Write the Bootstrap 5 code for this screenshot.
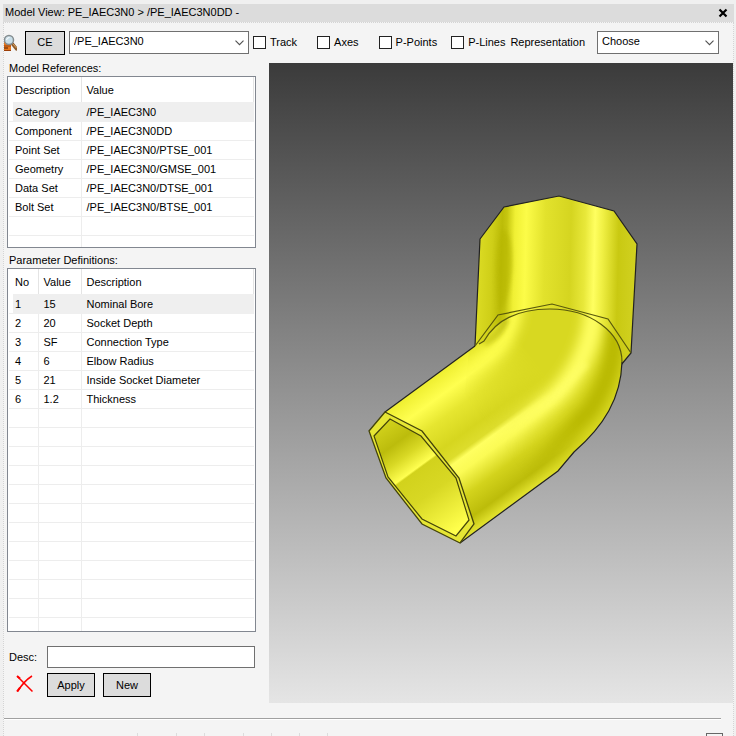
<!DOCTYPE html>
<html lang="en">
<head>
<meta charset="utf-8">
<meta name="viewport" content="width=device-width, initial-scale=1">
<title>Model View</title>
<link href="https://cdn.jsdelivr.net/npm/bootstrap@5.3.0/dist/css/bootstrap.min.css" rel="stylesheet">
<style>
  body { background: #f0f0f0; color: #000; font: 11px/13px "Liberation Sans", Arial, sans-serif; }
  .dock { margin: 4px 2px 0 3px; }
  .dock-title { height: 18px; background: #dcdcdc; padding: 0 6px 1px 2px; }
  .dock-body { background: #f4f4f4; border: 1px dotted #d4d4d4; border-bottom: 0; min-height: calc(100vh - 22px); }
  .close-btn { width: 10px; height: 10px; line-height: 0; }
  .toolbar { height: 40px; padding: 0 14px 1px 0; }
  .win-btn { height: 24px; border: 1px solid #000; border-radius: 0; background: #dcdcdc; color: #000; font-size: 11px; line-height: 13px; padding: 0; }
  .win-btn:hover { background: #e8e8e8; color: #000; border-color: #000; }
  .ce-btn { width: 40px; }
  .win-select { height: 23px; border: 1px solid #707070; border-radius: 0; color: #000; font-size: 11px; line-height: 13px; padding: 3px 20px 5px 4px;
    background: #fff url("data:image/svg+xml,%3Csvg xmlns='http://www.w3.org/2000/svg' viewBox='0 0 9 6'%3E%3Cpath d='M.5 .7 4.5 4.7 8.5 .7' fill='none' stroke='%23505050' stroke-width='1.1'/%3E%3C/svg%3E") no-repeat right 4px center / 9px 6px; }
  .elem-select { flex: 0 1 180px; width: 180px; }
  .rep-select { flex: 0 1 122px; width: 122px; margin-left: 12px; }
  .win-check { gap: 4px; margin-right: 20px; }
  .win-check.tight { margin-right: 14px; }
  .win-check:last-child { margin-right: 0; }
  .win-check .form-check-input { width: 13px; height: 13px; margin: 0; border: 1px solid #222; border-radius: 0; background-color: #fff; }
  .win-check label { padding-bottom: 1px; }
  .side { flex: 0 0 265px; padding: 0 13px 0 3px; }
  .side-label { margin: 0; padding-left: 2px; height: 13px; font-size: 11px; line-height: 11px; font-weight: 400; }
  .list-box + .side-label { margin-top: 7px; }
  .list-box { border: 1px solid #828790; background: #fff; padding: 0 1px; }
  .list-box table { margin: 0; color: #000; table-layout: fixed; }
  .list-box th, .list-box td { padding: 0 0 0 5px; font-weight: normal; vertical-align: middle; border: 0 solid #ededed; border-right-width: 1px; box-shadow: none; background: transparent; }
  .list-box th { height: 25px; padding-top: 2px; border-color: #e4e4e4; }
  .list-box td { height: 19px; border-bottom-width: 1px; padding-top: 2px; }
  .list-box td:last-child { border-right-width: 0; }
  .list-box th:first-child, .list-box td:first-child { padding-left: 6px; }
  .list-box tr.picked td { background: #efefef; border-color: #efefef; }
  .list-box tr.picked td:first-child { background: linear-gradient(90deg, #fff 4px, #efefef 4px); }
  .list-box tr.rest td { border-bottom-width: 0; padding: 0; }
  .refs tr.rest td { height: 12px; }
  .params tr.rest td { height: 14px; }
  .c-no { width: 29px; } .c-val { width: 43px; } .c-desc { width: 72px; }
  .desc-row { margin-top: 14px; padding-left: 2px; }
  .desc-row label { width: 38px; flex: none; }
  .win-input { height: 22px; border: 1px solid #707070; border-radius: 0; font-size: 11px; padding: 0 4px; margin-right: 1px; }
  .act-row { margin-top: 5px; gap: 8px; }
  .act-row .win-btn { width: 48px; }
  .del-btn { width: 32px; line-height: 0; padding: 0 0 3px 4px; }
  .stage { background: linear-gradient(#3b3b3b, #e5e5e5); }
  .rule { height: 2px; margin: 15px 12px 0 0; background: linear-gradient(#a0a0a0 50%, #fff 50%); }
  .strip { margin-top: 13px; height: 3px; padding: 0 10px 0 133px; overflow: hidden; }
  .tick { width: 1px; height: 3px; margin-right: 27px; background: #dcdcdc; }
  .tick.wide { margin-right: 38px; }
  .corner { width: 17px; height: 12px; border: 1px solid #666; }
</style>
<script src="https://cdn.jsdelivr.net/npm/bootstrap@5.3.0/dist/js/bootstrap.bundle.min.js"></script>
</head>
<body>
<main class="dock">
  <header class="dock-title d-flex align-items-center justify-content-between">
    <span>Model View: PE_IAEC3N0 &gt; /PE_IAEC3N0DD -</span>
    <button type="button" class="close-btn border-0 bg-transparent p-0" aria-label="Close">
      <svg width="10" height="10" viewBox="0 0 10 10"><path d="M1.5 1.5 8.5 8.5M8.5 1.5 1.5 8.5" stroke="#000" stroke-width="2.2" fill="none"/></svg>
    </button>
  </header>

  <div class="dock-body">
    <div class="toolbar d-flex align-items-center">
      <svg class="flex-shrink-0 me-2" width="13" height="18" viewBox="0 0 13 18" aria-hidden="true">
        <path d="M-3 7H7V17H-3Z" fill="#e8781c"/><path d="M-3 12H7M-3 16.500H7" stroke="#9c3f08"/><path d="M0 14H4" stroke="#552308"/>
        <path d="M8.500 10 12.500 15" stroke="#8a5a2c" stroke-width="3.200" stroke-linecap="round"/><path d="M8.500 9.500 12.500 14" stroke="#e0a660"/>
        <circle cx="5" cy="6" r="4.500" fill="#c9dfe9" stroke="#858d90" stroke-width="1.500"/><path d="M2.500 6Q3 3.500 5.500 3.500" stroke="#fff" fill="none"/>
      </svg>
      <button type="button" class="btn win-btn ce-btn flex-shrink-0 me-1">CE</button>
      <select class="form-select win-select elem-select" aria-label="Element"><option>/PE_IAEC3N0</option></select>
      <div class="d-flex align-items-center flex-grow-1 ms-1">
        <div class="win-check d-flex align-items-center"><input class="form-check-input" type="checkbox" id="track"><label for="track">Track</label></div>
        <div class="win-check d-flex align-items-center"><input class="form-check-input" type="checkbox" id="axes"><label for="axes">Axes</label></div>
        <div class="win-check tight d-flex align-items-center"><input class="form-check-input" type="checkbox" id="points"><label for="points">P-Points</label></div>
        <div class="win-check d-flex align-items-center"><input class="form-check-input" type="checkbox" id="lines"><label for="lines">P-Lines</label></div>
      </div>
      <label for="rep">Representation</label>
      <select class="form-select win-select rep-select" id="rep"><option>Choose</option></select>
    </div>

    <div class="d-flex">
      <section class="side">
        <h2 class="side-label" id="refs-label">Model References:</h2>
        <div class="list-box refs">
          <table class="table" aria-labelledby="refs-label">
            <colgroup><col class="c-desc"><col></colgroup>
            <thead><tr><th>Description</th><th>Value</th></tr></thead>
            <tbody>
              <tr class="picked"><td>Category</td><td>/PE_IAEC3N0</td></tr>
              <tr><td>Component</td><td>/PE_IAEC3N0DD</td></tr>
              <tr><td>Point Set</td><td>/PE_IAEC3N0/PTSE_001</td></tr>
              <tr><td>Geometry</td><td>/PE_IAEC3N0/GMSE_001</td></tr>
              <tr><td>Data Set</td><td>/PE_IAEC3N0/DTSE_001</td></tr>
              <tr><td>Bolt Set</td><td>/PE_IAEC3N0/BTSE_001</td></tr>
              <tr><td></td><td></td></tr>
              <tr class="rest"><td></td><td></td></tr>
            </tbody>
          </table>
        </div>
        <h2 class="side-label" id="params-label">Parameter Definitions:</h2>
        <div class="list-box params">
          <table class="table" aria-labelledby="params-label">
            <colgroup><col class="c-no"><col class="c-val"><col></colgroup>
            <thead><tr><th>No</th><th>Value</th><th>Description</th></tr></thead>
            <tbody>
              <tr class="picked"><td>1</td><td>15</td><td>Nominal Bore</td></tr>
              <tr><td>2</td><td>20</td><td>Socket Depth</td></tr>
              <tr><td>3</td><td>SF</td><td>Connection Type</td></tr>
              <tr><td>4</td><td>6</td><td>Elbow Radius</td></tr>
              <tr><td>5</td><td>21</td><td>Inside Socket Diameter</td></tr>
              <tr><td>6</td><td>1.2</td><td>Thickness</td></tr>
              <tr><td></td><td></td><td></td></tr><tr><td></td><td></td><td></td></tr><tr><td></td><td></td><td></td></tr>
              <tr><td></td><td></td><td></td></tr><tr><td></td><td></td><td></td></tr><tr><td></td><td></td><td></td></tr>
              <tr><td></td><td></td><td></td></tr><tr><td></td><td></td><td></td></tr><tr><td></td><td></td><td></td></tr>
              <tr><td></td><td></td><td></td></tr><tr><td></td><td></td><td></td></tr>
              <tr class="rest"><td></td><td></td><td></td></tr>
            </tbody>
          </table>
        </div>
        <div class="desc-row d-flex align-items-center"><label for="desc">Desc:</label><input type="text" class="form-control win-input" id="desc"></div>
        <div class="act-row d-flex align-items-center">
          <button type="button" class="del-btn border-0 bg-transparent" aria-label="Delete">
            <svg width="18" height="18" viewBox="0 0 18 18"><path d="M1.500 1.500 Q8 8 16.500 16.500" stroke="#f00" stroke-width="1.500" fill="none"/><path d="M16 1 Q8 6 1.500 16.500" stroke="#f00" stroke-width="1.500" fill="none"/><path d="M1 1 4 3.500M1 16.500 4 12.500" stroke="#f00" stroke-width="2"/></svg>
          </button>
          <button type="button" class="btn win-btn">Apply</button>
          <button type="button" class="btn win-btn">New</button>
        </div>
      </section>

      <section class="stage flex-grow-1 overflow-hidden" aria-label="3D view">
        <svg class="d-block w-100" viewBox="269 63 464 640" role="img" aria-label="Elbow fitting">
          <defs>
            <linearGradient id="sock" gradientUnits="userSpaceOnUse" x1="477" y1="270" x2="637" y2="274">
              <stop offset="0" stop-color="#dcdc24"/><stop offset=".09" stop-color="#cfcf18"/><stop offset=".15" stop-color="#bcbc08"/><stop offset=".18" stop-color="#c6c610"/>
              <stop offset=".23" stop-color="#f0f034"/><stop offset=".3" stop-color="#fcfc48"/><stop offset=".42" stop-color="#e2e22c"/><stop offset=".58" stop-color="#d5d520"/>
              <stop offset=".67" stop-color="#e8e83a"/><stop offset=".73" stop-color="#ffff60"/><stop offset=".78" stop-color="#f0f044"/><stop offset=".88" stop-color="#c9c912"/><stop offset="1" stop-color="#d2d222"/>
            </linearGradient>
            <linearGradient id="pipe" gradientUnits="userSpaceOnUse" x1="385" y1="412" x2="474" y2="534">
              <stop offset="0" stop-color="#eeee30"/><stop offset=".13" stop-color="#ffff50"/><stop offset=".26" stop-color="#e6e630"/><stop offset=".42" stop-color="#d6d61f"/><stop offset=".51" stop-color="#dddd2c"/>
              <stop offset=".545" stop-color="#ffff60"/><stop offset=".62" stop-color="#fbfb55"/><stop offset=".76" stop-color="#d3d31c"/><stop offset=".9" stop-color="#bcbc0a"/><stop offset=".97" stop-color="#dcdc28"/><stop offset="1" stop-color="#e4e430"/>
            </linearGradient>
            <linearGradient id="fadeMask" gradientUnits="userSpaceOnUse" x1="490" y1="430" x2="552" y2="384">
              <stop offset="0" stop-color="#000"/><stop offset="1" stop-color="#fff"/>
            </linearGradient>
            <mask id="bendMask" maskUnits="userSpaceOnUse" x="269" y="63" width="464" height="640"><rect x="269" y="63" width="464" height="640" fill="url(#fadeMask)"/></mask>
            <linearGradient id="bore" gradientUnits="userSpaceOnUse" x1="390" y1="419" x2="466" y2="523">
              <stop offset="0" stop-color="#d2d21c"/><stop offset=".18" stop-color="#bcbc0c"/><stop offset=".3" stop-color="#d8d824"/><stop offset=".43" stop-color="#ffff50"/><stop offset=".445" stop-color="#d2d21c"/><stop offset=".65" stop-color="#d8d824"/><stop offset="1" stop-color="#ffff4c"/>
            </linearGradient>
            <clipPath id="elbowClip"><path d="M385 412 475 346 484 340Q502 309 550 309C590 309 622 332 622 362C621 398 604 426 574 452L558 471 460 543 474 524 459 478 422 431Z"/></clipPath>
            <clipPath id="sockClip"><path d="M480 239 504 207 559 196 614 211 637 244 631 353 621 365 475 345Z"/></clipPath>
            <filter id="b2" x="-50%" y="-50%" width="200%" height="200%"><feGaussianBlur stdDeviation="2"/></filter>
            <filter id="b6" x="-50%" y="-50%" width="200%" height="200%"><feGaussianBlur stdDeviation="6"/></filter>
          </defs>

          <path d="M480 239 504 207 559 196 614 211 637 244 631 353 621 365 475 346Z" fill="url(#sock)" stroke="#222" stroke-width="1.200"/>
          <g clip-path="url(#sockClip)">
            <path d="M502 229Q513 232 512 268Q510 296 500 312Q492 260 502 229Z" fill="#b6b605" opacity=".6" filter="url(#b2)"/>
          </g>

          <path d="M385 412 475 346 484 340Q502 309 550 309C590 309 622 332 622 362C621 398 604 426 574 452L558 471 460 543 474 524 459 478 422 431Z" fill="url(#pipe)"/>
          <g clip-path="url(#elbowClip)">
            <g mask="url(#bendMask)" fill="none">
              <path d="M470 340 505 300H640V480H540L460 440Z" fill="#d8d821"/>
              <path d="M514 304Q512 340 482 360L395 420" stroke="#ffff50" stroke-width="18" filter="url(#b6)"/>
              <path d="M484 343Q500 336 506 318" stroke="#b9b90a" stroke-width="8" filter="url(#b2)" opacity=".75"/>
              <path d="M613 322Q620 365 590 410L500 500" stroke="#b8b806" stroke-width="19" filter="url(#b6)"/>
              <path d="M594 300Q596 352 558 394L478 458" stroke="#ffff62" stroke-width="20" filter="url(#b6)"/>
              <path d="M586 363 551 401 470 461" stroke="#ffff68" stroke-width="8" filter="url(#b2)" opacity=".55"/>
            </g>
          </g>

          <g fill="none" stroke="#59590c" stroke-width="1.200">
            <path d="M475 346 498 315 552 304 608 319 631 353"/>
            <path d="M479 344 484 341Q502 309 550 309C590 309 622 332 622 362"/>
          </g>
          <path d="M385 412 475 346M622 362C621 398 604 426 574 452L558 471 460 543" fill="none" stroke="#222" stroke-width="1.200"/>
          <path d="M385 412 369 431 386 478 422 524 460 543 474 524 459 478 422 431Z" fill="#e6e634" stroke="#44440a" stroke-width="1.300"/>
          <path d="M390 419 421 436 456 478 469 520 456 536 422 519 388 477 374 436Z" fill="url(#bore)" stroke="#44440a" stroke-width="1.200"/>
        </svg>
      </section>
    </div>

    <div class="rule"></div>
    <div class="strip d-flex justify-content-between" aria-hidden="true">
      <div class="d-flex"><i class="tick wide"></i><i class="tick"></i><i class="tick wide"></i><i class="tick"></i><i class="tick"></i><i class="tick"></i><i class="tick"></i></div>
      <span class="corner"></span>
    </div>
  </div>
</main>
</body>
</html>
